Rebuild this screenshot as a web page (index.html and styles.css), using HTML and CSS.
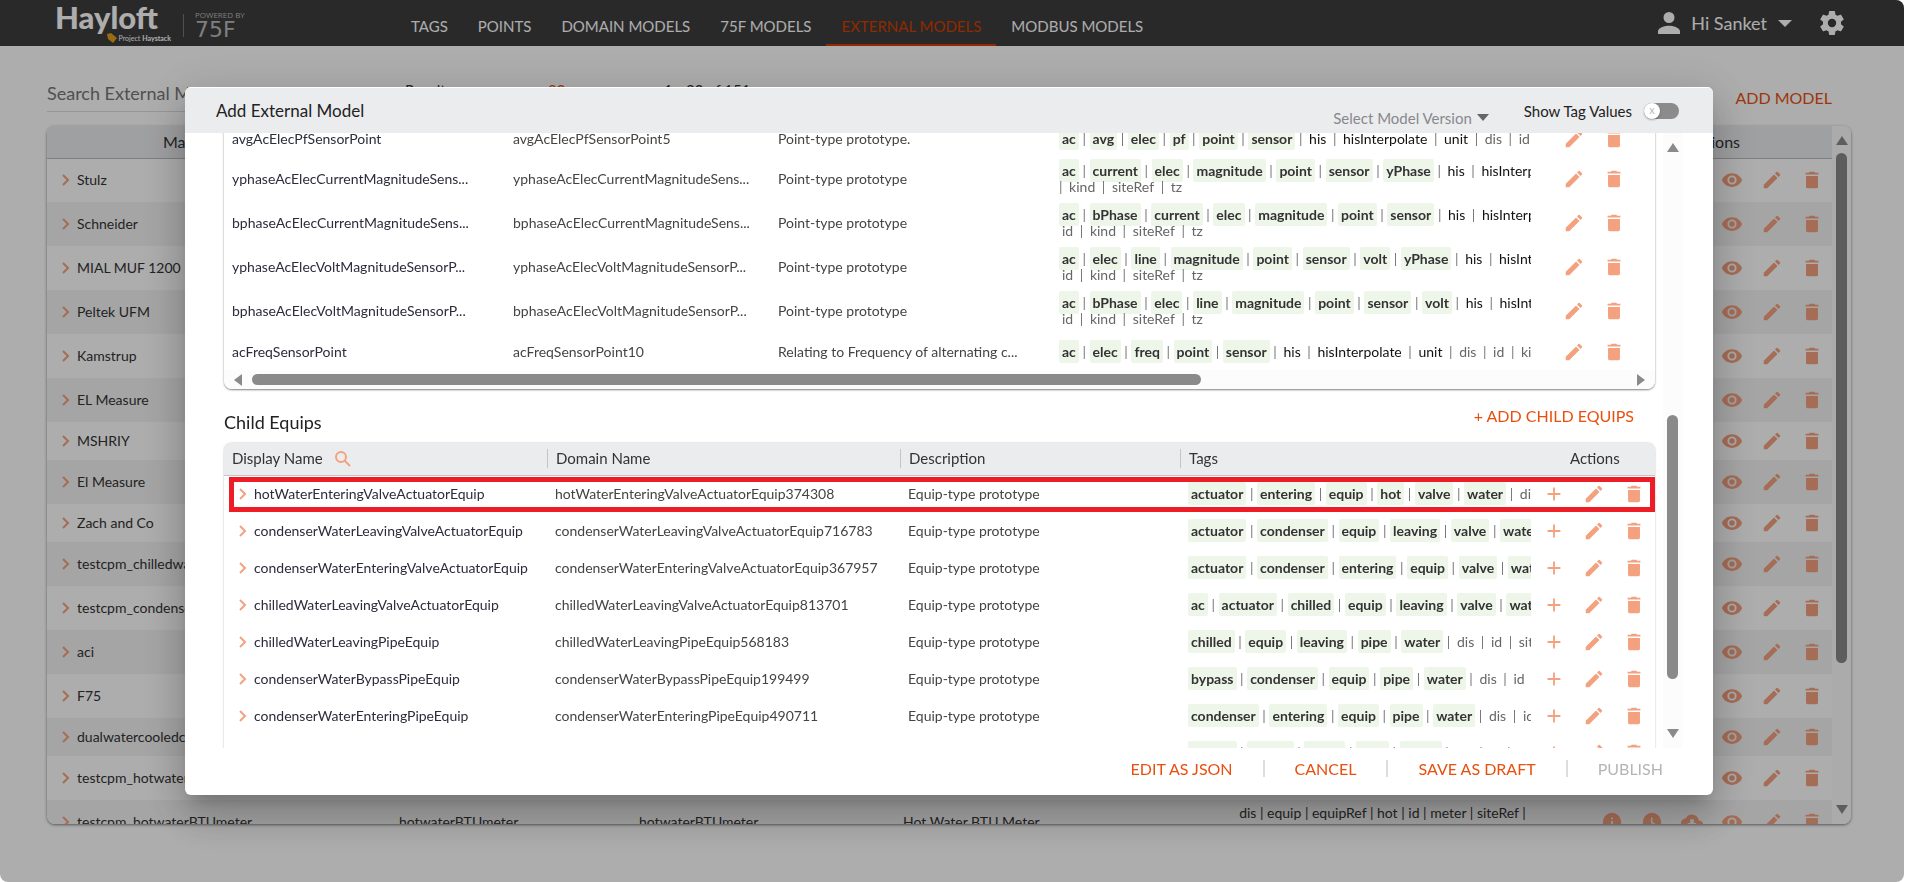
FILE: index.html
```html
<!DOCTYPE html>
<html lang="en">
<head>
<meta charset="utf-8">
<title>Hayloft - External Models</title>
<link rel="stylesheet" href="styles.css">
</head>
<body>
<svg class="sprite" aria-hidden="true">
  <symbol id="i-edit" viewBox="0 0 24 24"><path d="M3 21v-3.800L14.200 6l3.800 3.800L6.800 21zM15.300 4.900l1.600-1.600a1 1 0 0 1 1.400 0l2.400 2.400a1 1 0 0 1 0 1.400l-1.600 1.600z"/></symbol>
  <symbol id="i-trash" viewBox="0 0 24 24"><path d="M5.500 7.500h13V19a2 2 0 0 1-2 2h-9a2 2 0 0 1-2-2zM19 4h-3.500l-1-1h-5l-1 1H5v2h14z"/></symbol>
  <symbol id="i-eye" viewBox="0 0 24 24"><path fill-rule="evenodd" d="M12 4.500C7 4.500 2.700 7.600 1 12c1.700 4.400 6 7.500 11 7.500s9.300-3.100 11-7.500c-1.700-4.400-6-7.500-11-7.500zM12 17a5 5 0 1 1 0-10 5 5 0 0 1 0 10zm0-8a3 3 0 1 0 0 6 3 3 0 0 0 0-6z"/></symbol>
  <symbol id="i-plus" viewBox="0 0 24 24"><path d="M19 13h-6v6h-2v-6H5v-2h6V5h2v6h6z"/></symbol>
  <symbol id="i-chevron" viewBox="0 0 8 12"><path d="M1 1l5 5-5 5" fill="none" stroke="currentColor" stroke-width="2"/></symbol>
  <symbol id="i-info" viewBox="0 0 24 24"><path fill-rule="evenodd" d="M12 2a10 10 0 1 0 0 20 10 10 0 0 0 0-20zm1 15h-2v-6h2zm0-8h-2V7h2z"/></symbol>
  <symbol id="i-clock" viewBox="0 0 24 24"><path fill-rule="evenodd" d="M12 2a10 10 0 1 0 0 20 10 10 0 0 0 0-20zm4.200 14.200L11 13V7h1.500v5.200l4.500 2.700z"/></symbol>
  <symbol id="i-cloud" viewBox="0 0 24 24"><path fill-rule="evenodd" d="M19.300 10A7.500 7.500 0 0 0 5.300 8 6 6 0 0 0 6 20h13a5 5 0 0 0 .3-10zM17 13l-5 5-5-5h3V9h4v4z"/></symbol>
  <symbol id="i-search" viewBox="0 0 16 16"><path d="M10 10l5 5M11 6A5 5 0 1 1 1 6a5 5 0 0 1 10 0z" fill="none" stroke="currentColor" stroke-width="2"/></symbol>
</svg>

<div class="page">
  <header class="topbar">
    <a class="brand" href="#">
      <span class="brand-main">
        <span class="brand-name">Hayloft</span>
        <span class="brand-sub"><svg viewBox="0 0 10 10" width="10" height="10"><path d="M0 1l4-1 6 5-4 5-5-4z" fill="#e2a01c"/></svg>Project <b>Haystack</b></span>
      </span>
      <span class="brand-rule"></span>
      <span class="brand-side"><small>POWERED BY</small><span>75F</span></span>
    </a>
    <nav class="nav">
      <a href="#">TAGS</a>
      <a href="#">POINTS</a>
      <a href="#">DOMAIN MODELS</a>
      <a href="#">75F MODELS</a>
      <a href="#" class="active">EXTERNAL MODELS</a>
      <a href="#">MODBUS MODELS</a>
    </nav>
    <div class="account">
      <button class="user" type="button">
        <svg viewBox="4 4 16 16" width="22" height="22"><path d="M12 12a4 4 0 1 0 0-8 4 4 0 0 0 0 8zm0 2c-2.700 0-8 1.300-8 4v2h16v-2c0-2.700-5.300-4-8-4z"/></svg>
        <span>Hi Sanket</span>
        <i class="caret"></i>
      </button>
      <button class="gear" type="button" aria-label="Settings"><svg viewBox="2 2 20 20" width="24" height="24"><path fill-rule="evenodd" d="M19.430 12.980c.04-.32.07-.64.07-.98s-.03-.66-.07-.98l2.110-1.650a.5.5 0 0 0 .12-.64l-2-3.460a.5.5 0 0 0-.61-.22l-2.490 1a7.300 7.300 0 0 0-1.690-.98l-.38-2.650A.49.49 0 0 0 14 2h-4a.49.49 0 0 0-.49.420l-.38 2.650c-.61.250-1.170.590-1.690.98l-2.490-1a.5.5 0 0 0-.61.220l-2 3.460a.49.49 0 0 0 .12.640l2.110 1.650a7.900 7.900 0 0 0 0 1.960l-2.110 1.650a.5.5 0 0 0-.12.640l2 3.460c.12.220.39.300.61.220l2.490-1c.52.400 1.080.730 1.690.98l.38 2.650c.03.240.24.420.49.420h4c.25 0 .46-.18.490-.42l.38-2.650c.61-.25 1.170-.59 1.690-.98l2.490 1c.23.090.49 0 .61-.22l2-3.460a.5.5 0 0 0-.12-.64zM12 15.500a3.500 3.500 0 1 1 0-7 3.500 3.500 0 0 1 0 7z"/></svg></button>
    </div>
  </header>

  <main class="content">
    <div class="toolbar">
      <input class="search" type="text" placeholder="Search External Models" aria-label="Search External Models">
      <div class="pager"><span>Results per page</span><span class="size">20</span><span>1 - 20 of 151</span></div>
      <button class="link" type="button">ADD MODEL</button>
    </div>
    <div class="panel">
      <div class="panel-table">
        <table class="models">
          <colgroup><col class="m-name"><col class="m-model"><col class="m-ref"><col class="m-desc"><col><col class="m-act"></colgroup>
          <thead><tr><th class="first">Manufacturer</th><th>Name</th><th>Model</th><th>Description</th><th>Tags</th><th class="act">Actions</th></tr></thead>
          <tbody id="models"></tbody>
        </table>
      </div>
      <div class="vbar"><i class="up"></i><i class="thumb"></i><i class="down"></i></div>
    </div>
  </main>
</div>

<div class="overlay">
  <section class="dialog" role="dialog" aria-label="Add External Model">
    <header class="dialog-head">
      <h2>Add External Model</h2>
      <button class="version" type="button">Select Model Version<i class="caret"></i></button>
      <label class="toggle">Show Tag Values<input type="checkbox"><span class="track"><span class="knob">x</span></span></label>
    </header>
    <div class="dialog-body">
      <div class="scroll">
        <div class="card points-card">
          <table class="grid">
            <colgroup><col class="p-name"><col class="p-domain"><col class="p-desc"><col><col class="acts"></colgroup>
            <tbody id="points"></tbody>
          </table>
          <div class="hbar"><i class="left"></i><span class="rail"><i class="thumb"></i></span><i class="right"></i></div>
        </div>
        <div class="section-head"><h3>Child Equips</h3><button class="link" type="button">+ ADD CHILD EQUIPS</button></div>
        <div class="card">
          <table class="grid children">
            <colgroup><col class="c-name"><col class="c-domain"><col class="c-desc"><col><col class="acts"></colgroup>
            <thead><tr><th><span>Display Name <svg class="search-icon" width="16" height="16"><use href="#i-search"/></svg></span></th><th><span>Domain Name</span></th><th><span>Description</span></th><th><span>Tags</span></th><th class="act">Actions</th></tr></thead>
            <tbody id="equips"></tbody>
          </table>
        </div>
      </div>
      <div class="vbar"><i class="up"></i><i class="thumb"></i><i class="down"></i></div>
    </div>
    <footer class="dialog-foot">
      <button class="link" type="button">EDIT AS JSON</button>
      <button class="link" type="button">CANCEL</button>
      <button class="link" type="button">SAVE AS DRAFT</button>
      <button class="link" type="button" disabled>PUBLISH</button>
    </footer>
  </section>
</div>
<script src="script.js"></script>
</body>
</html>
```
FILE: styles.css
```css
* { box-sizing: border-box; }
html, body { height: 100%; }
body { margin: 0; overflow: hidden; background: #fff; font: 14px/16px Lato, sans-serif; color: #333; }
button { border: 0; padding: 0; margin: 0; background: none; font: inherit; color: inherit; }
h2, h3 { margin: 0; font-weight: 400; }
a { color: inherit; text-decoration: none; }
.sprite { display: none; }
svg { fill: currentColor; flex: none; }
.link { color: #e8500f; font-size: 16px; line-height: 20px; }
.link:disabled { color: #b5b5b5; }
.caret { border: 7px solid transparent; border-top: 7px solid; border-bottom: 0; }

.page { height: 100vh; display: flex; flex-direction: column; margin-right: 2px; border-radius: 0 8px 8px 8px; overflow: hidden; background: #fff; }
.topbar { flex: none; height: 46px; display: flex; justify-content: space-between; background: #3d3d3d; color: #fff; padding: 0 60px 0 55px; }
.brand { width: 341px; display: flex; }
.brand-main { width: 116px; padding-top: 1px; }
.brand-name { display: block; font: 900 31px/32px Lato, sans-serif; }
.brand-sub { display: flex; align-items: center; justify-content: flex-end; gap: 2px; font-size: 7px; line-height: 10px; }
.brand-rule { width: 1px; height: 23px; margin: 14px 11px 0 12px; background: #777; }
.brand-side { padding-top: 10px; color: #bbb; }
.brand-side small { display: block; font: 8px/10px "Open Sans", sans-serif; }
.brand-side span { display: block; font: 22px/20px "DejaVu Sans", sans-serif; }
.nav { display: flex; flex: 1; font-size: 15px; line-height: 20px; }
.nav a { padding: 16px 15px 8px; border-bottom: 2px solid transparent; }
.nav .active { color: #d43e00; border-color: #d43e00; }
.account { display: flex; gap: 28px; align-items: center; }
.user { display: flex; align-items: center; gap: 11px; font-size: 18px; line-height: 22px; }
.gear { height: 24px; }

.content { flex: 1; min-height: 0; display: flex; flex-direction: column; padding: 32px 53px 58px 47px; }
.toolbar { flex: none; height: 48px; display: flex; justify-content: space-between; }
.search { width: 300px; height: 34px; border: 0; border-bottom: 1px solid #ddd; padding: 0 0 3px; background: none; font: 18px/22px Lato, sans-serif; }
.search::placeholder { color: #777; opacity: 1; }
.pager { display: grid; grid-template-columns: 143px 116px auto; flex: 1; padding: 4px 0 0 58px; font-size: 15px; }
.size { color: #e8500f; }
.toolbar .link { align-self: start; padding: 10px 19px 0 0; }
.panel { flex: 1; min-height: 0; display: flex; overflow: hidden; border-radius: 8px; box-shadow: 0 1px 3px rgba(0,0,0,.5); background: #fff; }
.panel-table { flex: 1; min-width: 0; overflow: hidden; }
table { width: 100%; border-collapse: collapse; table-layout: fixed; }
th, td { padding: 0; text-align: left; font-weight: 400; }
.models th { height: 32px; background: #ebecee; border-bottom: 1px solid #bbb; text-align: center; font-size: 16px; }
.models .first { padding-right: 12px; }
.models .act { text-align: left; padding-left: 108px; }
.models td { height: 44px; white-space: nowrap; padding-left: 12px; }
.models .short td { height: 38px; }
.models tr:nth-child(even) td { background: #f4f4f4; }
.models td:first-child { padding-left: 15px; }
.m-name { width: 340px; }
.m-model { width: 240px; }
.m-ref { width: 264px; }
.m-desc { width: 295px; }
.m-act { width: 253px; }
.models .m-tags { text-align: center; line-height: 18px; padding: 0; }
.name { display: flex; align-items: center; gap: 7px; }
.name svg, .search-icon, .icons { color: #f4a17f; }
.icons { display: flex; justify-content: flex-end; }
.icons button { width: 40px; height: 24px; display: flex; align-items: center; justify-content: center; }

.vbar { flex: none; width: 19px; display: flex; flex-direction: column; align-items: center; background: #fcfcfc; }
.vbar i, .hbar i { display: block; color: #8a8a8a; }
.up { border: 6px solid transparent; border-bottom: 9px solid; border-top: 0; margin-top: 10px; }
.down { border: 6px solid transparent; border-top: 9px solid; border-bottom: 0; margin: auto 0 10px; }
.vbar .thumb { width: 11px; border-radius: 6px; background: #8a8a8a; }
.panel .thumb { margin-top: 8px; height: 73%; }
.dialog .vbar .thumb { margin-top: 263px; height: 43%; }

.overlay { position: fixed; inset: 0 2px 0 0; display: flex; padding: 87px 191px 87px 185px; background: rgba(0,0,0,.32); border-radius: 0 8px 8px 8px; }
.dialog { flex: 1; min-width: 0; display: flex; flex-direction: column; overflow: hidden; border-radius: 6px; background: #fff; box-shadow: 0 11px 15px -7px rgba(0,0,0,.2), 0 24px 38px 3px rgba(0,0,0,.14), 0 9px 46px 8px rgba(0,0,0,.12); }
.dialog-head { flex: none; height: 46px; display: flex; align-items: center; padding: 0 34px 0 31px; border-top: 1px solid #fff; background: #ebecee; color: #222; }
.dialog-head h2 { font-size: 17px; line-height: 22px; margin-right: auto; }
.version { display: flex; align-items: center; gap: 5px; padding-top: 14px; margin-right: 35px; font-size: 15px; line-height: 20px; color: #88888d; }
.version .caret { color: #666; border-width: 7px 6px 0; }
.toggle { display: flex; align-items: center; gap: 12px; font-size: 15px; line-height: 20px; }
.toggle input { position: absolute; opacity: 0; }
.track { width: 35px; height: 16px; border-radius: 8px; background: #8b8b8b; }
.knob { display: block; width: 16px; height: 16px; border-radius: 8px; background: #fff; box-shadow: 0 1px 2px rgba(0,0,0,.3); color: #bbb; font-size: 11px; line-height: 14px; text-align: center; }

.dialog-body { flex: 1; min-height: 0; display: flex; overflow: hidden; padding: 0 31px 0 39px; gap: 8px; }
.scroll { flex: 1; min-width: 0; }
.card { overflow: hidden; border-radius: 8px; box-shadow: 0 0 2px rgba(0,0,0,.3); }
.points-card { margin-top: -13px; box-shadow: 0 1px 2px rgba(0,0,0,.5); }
.grid td { height: 37px; padding-left: 8px; white-space: nowrap; overflow: hidden; color: #444; }
.grid .tall td { height: 44px; }
.grid td:first-child { color: #2c2c3c; }
.grid td:last-child { padding-left: 0; }
.p-name, .p-desc { width: 281px; }
.p-domain { width: 265px; }
.c-name { width: 323px; }
.c-domain { width: 353px; }
.c-desc { width: 280px; }
.acts { width: 124px; }
#points .icons { padding-right: 21px; }
.children .icons { padding-right: 1px; }
.children td:first-child { padding-left: 15px; }
.tags b, .tags span { padding: 3px; border-radius: 2px; }
.tags b { background: #eef6ea; color: #333; }
.tags span { color: #666; }
.tags .own { color: #111; }
.grid .tags { color: #777; }
.hbar { height: 19px; display: flex; align-items: center; gap: 10px; padding: 0 10px; background: #fcfcfc; }
.left { border: 6px solid transparent; border-right: 8px solid; border-left: 0; }
.right { border: 6px solid transparent; border-left: 8px solid; border-right: 0; }
.rail { flex: 1; }
.rail .thumb { width: 69%; height: 11px; border-radius: 6px; background: #8a8a8a; }
.section-head { display: flex; justify-content: space-between; align-items: flex-start; height: 54px; padding: 17px 21px 0 0; }
.section-head h3 { font-size: 18px; line-height: 32px; color: #222; }
.children th { height: 32px; padding: 0; background: #ebecee; border-bottom: 1px solid #c4c4c6; font-size: 15px; line-height: 19px; }
.children th span { display: flex; align-items: center; gap: 12px; padding-left: 8px; }
.children th + th span { border-left: 1px solid #c4c4c6; }
.children .act { padding-left: 39px; }
.marked { position: relative; }
.marked td:last-child::after { content: ""; position: absolute; inset: 2px 0 0 5px; border: 5px solid #ee1c25; }
.dialog-foot { flex: none; height: 47px; display: flex; justify-content: flex-end; align-items: center; padding: 0 20px 7px; }
.dialog-foot .link { padding: 0 30px; height: 17px; line-height: 17px; }
.dialog-foot .link + .link { border-left: 2px solid #ddd; }
```
FILE: script.js
```js
const models = [
  ["Stulz"], ["Schneider"], ["MIAL MUF 1200"], ["Peltek UFM"], ["Kamstrup"], ["EL Measure"],
  ["MSHRIY", 1], ["El Measure"], ["Zach and Co", 1], ["testcpm_chilledwater"], ["testcpm_condenser"],
  ["aci"], ["F75"], ["dualwatercooledchiller", 1], ["testcpm_hotwater"],
  ["testcpm_hotwaterBTUmeter", 0, "hotwaterBTUmeter", "hotwaterBTUmeter", "Hot Water BTU Meter",
    "dis | equip | equipRef | hot | id | meter | siteRef |<br>siteRef | tz | water"]
];
const points = [
  ["avgAcElecPfSensorPoint", "avgAcElecPfSensorPoint5", "Point-type prototype.", "ac avg elec pf point sensor", "his hisInterpolate unit", "dis id kind"],
  ["yphaseAcElecCurrentMagnitudeSens...", "yphaseAcElecCurrentMagnitudeSens...", "Point-type prototype", "ac current elec magnitude point sensor yPhase", "his hisInterpolate", "", "| kind siteRef tz"],
  ["bphaseAcElecCurrentMagnitudeSens...", "bphaseAcElecCurrentMagnitudeSens...", "Point-type prototype", "ac bPhase current elec magnitude point sensor", "his hisInterpolate", "", "id kind siteRef tz"],
  ["yphaseAcElecVoltMagnitudeSensorP...", "yphaseAcElecVoltMagnitudeSensorP...", "Point-type prototype", "ac elec line magnitude point sensor volt yPhase", "his hisInterpolate", "", "id kind siteRef tz"],
  ["bphaseAcElecVoltMagnitudeSensorP...", "bphaseAcElecVoltMagnitudeSensorP...", "Point-type prototype", "ac bPhase elec line magnitude point sensor volt", "his hisInterpolate", "", "id kind siteRef tz"],
  ["acFreqSensorPoint", "acFreqSensorPoint10", "Relating to Frequency of alternating c...", "ac elec freq point sensor", "his hisInterpolate unit", "dis id kind"]
];
const equips = [
  ["hotWaterEnteringValveActuatorEquip", "374308", "actuator entering equip hot valve water"],
  ["condenserWaterLeavingValveActuatorEquip", "716783", "actuator condenser equip leaving valve water"],
  ["condenserWaterEnteringValveActuatorEquip", "367957", "actuator condenser entering equip valve water"],
  ["chilledWaterLeavingValveActuatorEquip", "813701", "ac actuator chilled equip leaving valve water"],
  ["chilledWaterLeavingPipeEquip", "568183", "chilled equip leaving pipe water"],
  ["condenserWaterBypassPipeEquip", "199499", "bypass condenser equip pipe water"],
  ["condenserWaterEnteringPipeEquip", "490711", "condenser entering equip pipe water"],
  ["", "", "bypass chilled equip pipe water"]
];

const labels = { edit: "Edit", trash: "Delete", eye: "View", plus: "Add", info: "Info", clock: "History", cloud: "Download" };
const icon = (name, size) => `<svg width="${size}" height="${size}"><use href="#i-${name}"/></svg>`;
const icons = names => `<div class="icons">${names.split(" ").map(n =>
  `<button type="button" aria-label="${labels[n]}">${icon(n, 22)}</button>`).join("")}</div>`;
const chevron = `<svg width="8" height="12"><use href="#i-chevron"/></svg>`;
const list = (words, open, close) => words ? words.split(" ").map(w => open + w + close) : [];
const tagLine = (strong, own, base) => [
  ...list(strong, "<b>", "</b>"), ...list(own, '<span class="own">', "</span>"), ...list(base, "<span>", "</span>")
].join(" | ");

document.getElementById("models").innerHTML = models.map(([name, short, a = "", b = "", c = "", tags = ""]) =>
  `<tr${short ? ' class="short"' : ""}><td><div class="name">${chevron}${name}</div></td><td>${a}</td><td>${b}</td><td>${c}</td>` +
  `<td class="m-tags">${tags}</td><td>${icons(tags ? "info clock cloud eye edit trash" : "eye edit trash")}</td></tr>`).join("");

document.getElementById("points").innerHTML = points.map(([name, domain, desc, strong, own, base, second]) => {
  const lead = second && second.startsWith("|") ? "| " : "";
  const extra = second ? `<div>${lead}${tagLine("", "", second.replace("| ", ""))}</div>` : "";
  return `<tr${second ? ' class="tall"' : ""}><td>${name}</td><td>${domain}</td><td>${desc}</td>` +
    `<td class="tags"><div>${tagLine(strong, own, base)}</div>${extra}</td><td>${icons("edit trash")}</td></tr>`;
}).join("");

document.getElementById("equips").innerHTML = equips.map(([name, number, strong], i) =>
  `<tr${i === 0 ? ' class="marked"' : ""}><td>${name && `<div class="name">${chevron}${name}</div>`}</td><td>${name}${number}</td><td>${name && "Equip-type prototype"}</td>` +
  `<td class="tags"><div>${tagLine(strong, "", "dis id siteRef")}</div></td><td>${icons("plus edit trash")}</td></tr>`).join("");
```
